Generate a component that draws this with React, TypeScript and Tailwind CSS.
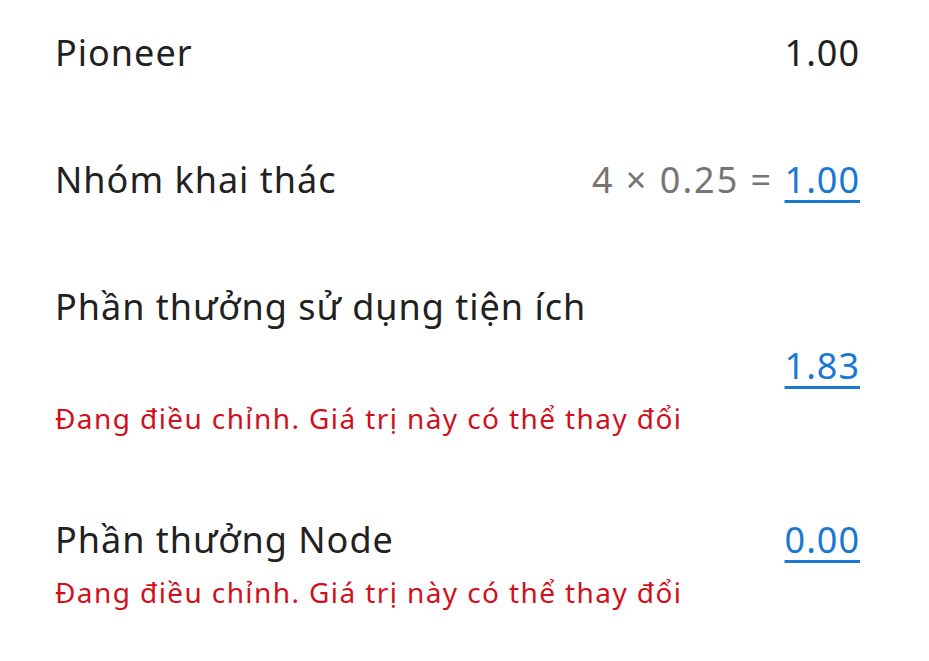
const font = { fontFamily: '"Noto Sans", "Lato", sans-serif' };

const Warning = () => (
  <p className="mt-[10px] text-[28px] leading-[36px] tracking-[1.4px] text-[#d0101b]">
    Đang điều chỉnh. Giá trị này có thể thay đổi
  </p>
);

const Amount = ({ value }: { value: string }) => (
  <a
    href="#"
    className="text-[#1a78d2] underline decoration-[3px] underline-offset-[7px]"
  >
    {value}
  </a>
);

export default function App() {
  return (
    <div
      className="min-h-[661px] w-full bg-white pl-[55px] pr-[69px] pt-[29px] text-[#212121]"
      style={font}
    >
      <div className="flex items-center justify-between text-[36px] leading-[48px] tracking-[1px]">
        <span>Pioneer</span>
        <span>1.00</span>
      </div>

      <div className="mt-[79px] flex items-center justify-between text-[36px] leading-[48px] tracking-[1px]">
        <span>Nhóm khai thác</span>
        <span>
          <span className="tracking-[2px] text-[#757575]">4 × 0.25 = </span>
          <Amount value="1.00" />
        </span>
      </div>

      <div className="mt-[79px] text-[36px] leading-[48px] tracking-[1px]">
        <div>Phần thưởng sử dụng tiện ích</div>
        <div className="mt-[11px] flex justify-end">
          <Amount value="1.83" />
        </div>
        <Warning />
      </div>

      <div className="mt-[80px] text-[36px] leading-[48px] tracking-[1px]">
        <div className="flex items-center justify-between">
          <span>Phần thưởng Node</span>
          <Amount value="0.00" />
        </div>
        <Warning />
      </div>
    </div>
  );
}
